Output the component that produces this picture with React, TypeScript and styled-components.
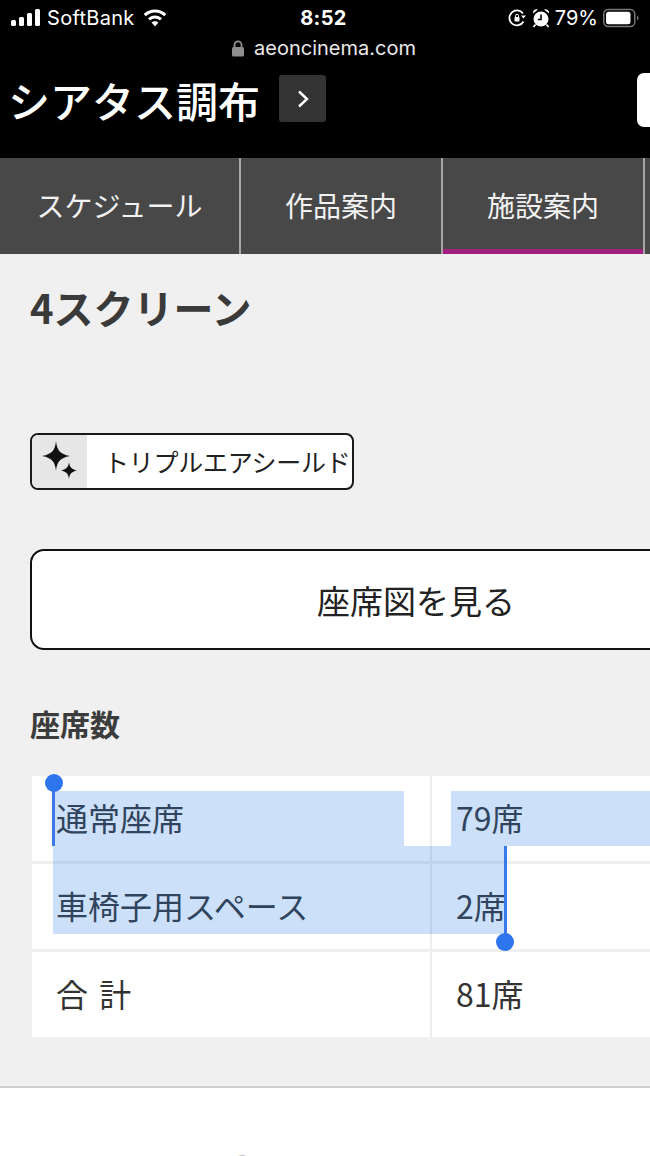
import React from 'react';
import styled, { createGlobalStyle } from 'styled-components';

const CJK = `"Noto Sans CJK JP", "Noto Sans", sans-serif`;

const Global = createGlobalStyle`
  html, body { margin: 0; padding: 0; background: #fff; }
  body { font-family: ${CJK}; }
  #root { width: 650px; height: 1156px; overflow: hidden; }
`;

const Page = styled.div`
  position: relative;
  width: 650px;
  height: 1156px;
  overflow: hidden;
  display: flex;
  flex-direction: column;
`;

const Top = styled.header`
  height: 158px;
  background: #000;
  color: #fff;
  display: flex;
  flex-direction: column;
  flex: none;
`;

const StatusBar = styled.div`
  height: 36px;
  display: grid;
  grid-template-columns: 1fr auto 1fr;
  align-items: center;
  font-family: Inter, "Liberation Sans", sans-serif;
  font-size: 20px;
`;

const StatusLeft = styled.div`
  display: flex;
  align-items: center;
  padding-left: 11px;
  gap: 7px;
`;

const StatusRight = styled.div`
  display: flex;
  align-items: center;
  justify-content: flex-end;
  padding-right: 11px;
  gap: 5px;
`;

const Clock = styled.div`
  font-weight: 700;
  font-size: 20px;
  letter-spacing: 0.4px;
  padding-right: 3px;
`;

const Carrier = styled.span`
  font-size: 20px;
  letter-spacing: 0.3px;
  margin-right: 1px;
`;

const UrlRow = styled.div`
  display: flex;
  justify-content: center;
  align-items: center;
  gap: 9px;
  height: 24px;
  font-family: Inter, "Liberation Sans", sans-serif;
  font-size: 20px;
  color: #e9e9e9;
  padding-right: 3px;
`;

const TitleRow = styled.div`
  display: flex;
  align-items: flex-start;
  padding-left: 8px;
  margin-top: 15px;
  position: relative;
`;

const CinemaName = styled.h1`
  margin: 0;
  font-size: 42px;
  line-height: 50px;
  font-weight: 500;
  letter-spacing: 0;
  font-family: ${CJK};
`;

const ChevronButton = styled.div`
  width: 47px;
  height: 47px;
  margin-left: 19px;
  border-radius: 3px;
  background: #333;
  display: flex;
  align-items: center;
  justify-content: center;
`;

const SearchEdge = styled.div`
  position: absolute;
  right: 0;
  top: -2px;
  width: 13px;
  height: 54px;
  background: #fff;
  border-radius: 7px 0 0 7px;
`;

const Tabs = styled.nav`
  height: 96px;
  background: #484848;
  display: flex;
  flex: none;
  padding-left: 0;
`;

const Tab = styled.div<{ $w: number; $active?: boolean }>`
  width: ${(p) => p.$w}px;
  flex: none;
  box-sizing: border-box;
  height: 100%;
  border-right: 2px solid #a6a6a6;
  color: #f2f2f2;
  font-size: 28px;
  display: flex;
  align-items: center;
  justify-content: center;
  padding-bottom: 3px;
  box-shadow: ${(p) => (p.$active ? 'inset 0 -5px 0 #a01f7f' : 'none')};
`;

const Content = styled.main`
  flex: none;
  height: 834px;
  background: #f0f0f0;
  border-bottom: 2px solid #cfcfcf;
  box-sizing: border-box;
  padding: 24px 0 0 30px;
  display: flex;
  flex-direction: column;
  align-items: flex-start;
  color: #333;
`;

const ScreenTitle = styled.h2`
  margin: 0;
  font-size: 40px;
  line-height: 58px;
  font-weight: 700;
  color: #3a3a3a;
`;

const Badge = styled.div`
  margin-top: 97px;
  width: 324px;
  height: 57px;
  box-sizing: border-box;
  border: 2px solid #1a1a1a;
  border-radius: 8px;
  background: #fff;
  display: flex;
  overflow: hidden;
  flex: none;
`;

const BadgeIcon = styled.div`
  width: 55px;
  background: #e6e6e6;
  display: flex;
  align-items: center;
  justify-content: center;
  flex: none;
`;

const BadgeLabel = styled.div`
  font-size: 25px;
  color: #222;
  padding-left: 17px;
  line-height: 53px;
  white-space: nowrap;
  letter-spacing: -0.25px;
`;

const SeatMapButton = styled.div`
  margin-top: 59px;
  width: 772px;
  height: 101px;
  flex: none;
  box-sizing: border-box;
  border: 2px solid #111;
  border-radius: 14px;
  background: #fff;
  color: #222;
  font-size: 33px;
  display: flex;
  align-items: center;
  justify-content: center;
`;

const SectionHeading = styled.h3`
  margin: 50px 0 0;
  font-size: 30px;
  line-height: 46px;
  font-weight: 700;
  color: #3c3c3c;
`;

const SeatTable = styled.div`
  margin: 30px 0 0 2px;
  width: 800px;
  background: #fff;
  flex: none;
`;

const Row = styled.div<{ $last?: boolean }>`
  display: grid;
  grid-template-columns: 398px 1fr;
  height: ${(p) => (p.$last ? 85 : 88)}px;
  box-sizing: border-box;
  border-bottom: ${(p) => (p.$last ? '0' : '3px solid #efefef')};
`;

const Cell = styled.div`
  font-size: 32px;
  color: #333;
  display: flex;
  align-items: center;
  padding-left: 24px;
  white-space: nowrap;
  padding-bottom: 4px;
  & + & {
    border-left: 2px solid #ececec;
  }
`;

const LabelCell = styled(Cell)`
  padding-left: 24px;
`;

const Spaced = styled.span`
  word-spacing: 4px;
`;

const Footer = styled.div`
  flex: 1;
  background: #fff;
  position: relative;
  overflow: hidden;
`;

const FooterHeading = styled.div`
  position: absolute;
  left: 88px;
  top: 57px;
  font-size: 44px;
  line-height: 60px;
  font-weight: 700;
  color: #222;
  white-space: nowrap;
`;

const Selection = styled.div<{ $l: number; $t: number; $w: number; $h: number }>`
  position: absolute;
  left: ${(p) => p.$l}px;
  top: ${(p) => p.$t}px;
  width: ${(p) => p.$w}px;
  height: ${(p) => p.$h}px;
  background: rgba(46, 125, 232, 0.24);
  pointer-events: none;
`;

const Caret = styled.div<{ $l: number; $t: number; $h: number }>`
  position: absolute;
  left: ${(p) => p.$l}px;
  top: ${(p) => p.$t}px;
  width: 3px;
  height: ${(p) => p.$h}px;
  background: #3b78e7;
`;

const Knob = styled.div<{ $l: number; $t: number }>`
  position: absolute;
  left: ${(p) => p.$l}px;
  top: ${(p) => p.$t}px;
  width: 18px;
  height: 18px;
  border-radius: 50%;
  background: #2f76ee;
`;

const Bars = () => (
  <svg width="29" height="18" viewBox="0 0 29 18" fill="#fff">
    <rect x="0" y="11" width="5" height="6" rx="1.5" />
    <rect x="8" y="8" width="5" height="9" rx="1.5" />
    <rect x="16" y="4" width="5" height="13" rx="1.5" />
    <rect x="24" y="0" width="5" height="17" rx="1.5" />
  </svg>
);

const Wifi = () => (
  <svg width="24" height="18" viewBox="0 0 24 18" fill="#fff">
    <path d="M12 0.5C7.6 0.5 3.6 2.2 0.7 5l2.1 2.2C5.2 4.9 8.4 3.5 12 3.5s6.8 1.4 9.2 3.7L23.3 5C20.4 2.2 16.4 0.5 12 0.5z" />
    <path d="M12 6.5c-2.7 0-5.2 1.1-7 2.8l2.1 2.2c1.3-1.2 3-2 4.9-2s3.6.8 4.9 2l2.1-2.2c-1.8-1.7-4.3-2.8-7-2.8z" />
    <path d="M12 12.2c-1.3 0-2.5.5-3.4 1.4L12 17.5l3.4-3.9c-.9-.9-2.1-1.4-3.4-1.4z" />
  </svg>
);

const RotationLock = () => (
  <svg width="19" height="19" viewBox="0 0 19 19" fill="none" stroke="#fff">
    <path d="M15.5 12.5A7.5 7.5 0 1 1 15 4.5" strokeWidth="1.8" />
    <path d="M13 6.5h5l-2.5 3z" fill="#fff" stroke="none" />
    <rect x="6.5" y="8" width="5" height="4.5" rx="0.8" fill="#fff" stroke="none" />
    <path d="M7.5 8V6.8a1.5 1.5 0 0 1 3 0V8" strokeWidth="1" />
  </svg>
);

const Alarm = () => (
  <svg width="18" height="20" viewBox="0 0 18 20" fill="#fff">
    <circle cx="9" cy="11" r="7.5" />
    <path d="M1 5.5a3.6 3.6 0 0 1 5-4z M17 5.5a3.6 3.6 0 0 0-5-4z" />
    <path d="M3.5 16.5l-2 2.5M14.5 16.5l2 2.5" stroke="#fff" strokeWidth="1.8" />
    <path d="M9 6.5V11.5H5.8" stroke="#000" strokeWidth="1.6" fill="none" />
  </svg>
);

const Battery = () => (
  <svg width="36" height="20" viewBox="0 0 36 20">
    <rect x="0.75" y="1.5" width="31" height="17" rx="4.5" fill="none" stroke="#777" strokeWidth="1.5" />
    <rect x="3" y="3.7" width="24.5" height="12.6" rx="2.5" fill="#fff" />
    <path d="M34 7.5c1 .4 1.5 1.4 1.5 2.5s-.5 2.1-1.5 2.5z" fill="#777" />
  </svg>
);

const Lock = () => (
  <svg width="14" height="17" viewBox="0 0 14 17">
    <path d="M3.5 7.5V4.8a3.5 3.5 0 0 1 7 0v2.7" fill="none" stroke="#8e8e8e" strokeWidth="1.8" />
    <rect x="1" y="7" width="12" height="9.5" rx="1.5" fill="#8e8e8e" />
  </svg>
);

const Chevron = () => (
  <svg width="14" height="20" viewBox="0 0 14 20" fill="none" stroke="#fff" strokeWidth="2.4">
    <path d="M3 2.5l8 7.5-8 7.5" />
  </svg>
);

const Sparkles = () => (
  <svg width="44" height="44" viewBox="0 0 44 44" fill="#111">
    <path d="M18 1c1 9 3.5 13 14 15-10.500 2-13 6-14 15-1-9-3.500-13-14-15 10.500-2 13-6 14-15z" />
    <path d="M31 22c.6 5 2.200 7 8 8.500-5.800 1.300-7.400 3.500-8 8.500-.6-5-2.200-7.200-8-8.500 5.800-1.500 7.400-3.500 8-8.500z" />
  </svg>
);

export default function App() {
  return (
    <Page>
      <Global />
      <Top>
        <StatusBar>
          <StatusLeft>
            <Bars />
            <Carrier>SoftBank</Carrier>
            <Wifi />
          </StatusLeft>
          <Clock>8:52</Clock>
          <StatusRight>
            <RotationLock />
            <Alarm />
            <span>79%</span>
            <Battery />
          </StatusRight>
        </StatusBar>
        <UrlRow>
          <Lock />
          <span>aeoncinema.com</span>
        </UrlRow>
        <TitleRow>
          <CinemaName>シアタス調布</CinemaName>
          <ChevronButton>
            <Chevron />
          </ChevronButton>
          <SearchEdge />
        </TitleRow>
      </Top>
      <Tabs>
        <Tab $w={241}>スケジュール</Tab>
        <Tab $w={202}>作品案内</Tab>
        <Tab $w={202} $active>施設案内</Tab>
      </Tabs>
      <Content>
        <ScreenTitle>4スクリーン</ScreenTitle>
        <Badge>
          <BadgeIcon>
            <Sparkles />
          </BadgeIcon>
          <BadgeLabel>トリプルエアシールド</BadgeLabel>
        </Badge>
        <SeatMapButton>座席図を見る</SeatMapButton>
        <SectionHeading>座席数</SectionHeading>
        <SeatTable>
          <Row>
            <LabelCell>通常座席</LabelCell>
            <Cell>79席</Cell>
          </Row>
          <Row>
            <LabelCell>車椅子用スペース</LabelCell>
            <Cell>2席</Cell>
          </Row>
          <Row $last>
            <LabelCell><Spaced>合 計</Spaced></LabelCell>
            <Cell>81席</Cell>
          </Row>
        </SeatTable>
      </Content>
      <Footer>
        <FooterHeading>会社案内</FooterHeading>
      </Footer>
      <Selection $l={53} $t={791} $w={351} $h={55} />
      <Selection $l={451} $t={791} $w={199} $h={55} />
      <Selection $l={53} $t={846} $w={453} $h={88} />
      <Caret $l={52} $t={785} $h={61} />
      <Caret $l={504} $t={846} $h={90} />
      <Knob $l={45} $t={774} />
      <Knob $l={496} $t={933} />
    </Page>
  );
}
